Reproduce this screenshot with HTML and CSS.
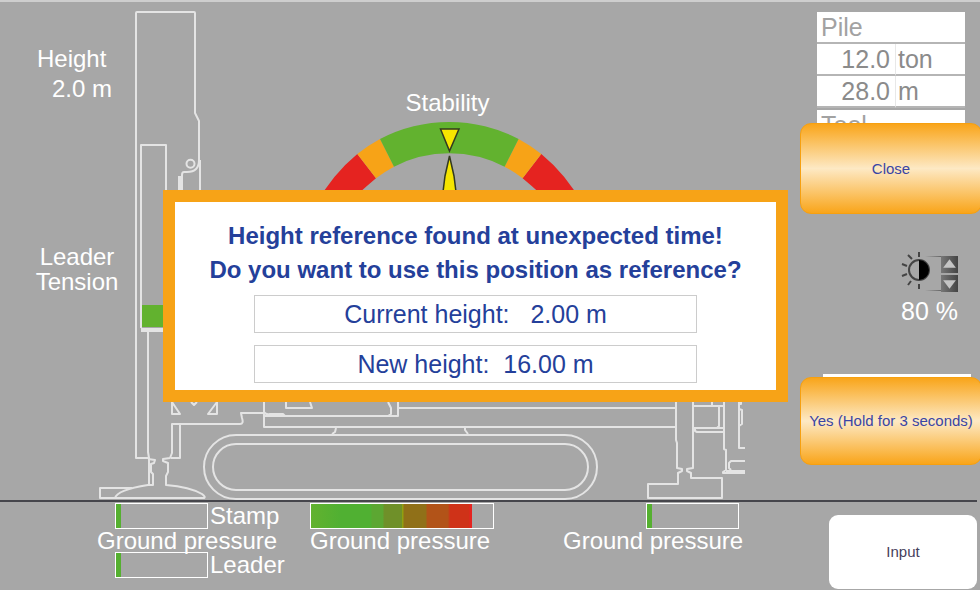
FILE: index.html
```html
<!DOCTYPE html>
<html lang="en">
<head>
<meta charset="utf-8">
<title>Height reference</title>
<link rel="stylesheet" href="styles.css">
</head>
<body>
<div class="screen">
  <main class="stage">
    <svg class="machine" viewBox="0 0 800 500" aria-hidden="true">
      <g class="line">
        <path d="M148 458H136V13Q136 12 137 12H194Q195 12 195 13V113L199 121V160Q199 172 187 172H184Q182 172 182 175V192"/>
        <circle cx="190.500" cy="163.700" r="4"/>
        <path class="thick" d="M180 176V192"/>
        <path d="M200 160V192M141 328V145H166V192M148 331V452L149 458V485"/>
        <path class="thick" d="M141 330H166"/>
        <path d="M148 459L155 460L154 463L151 464V472L153 474V485H148Q117 490 115 498H204Q206 497 202 494Q190 487 166 485V476L168 472V463L163 461V459L170 458L172 453V424H240Q244 424 242 418L241 413H264"/>
        <path d="M180 424V458H171M132 488H100V498H116"/>
        <path d="M172 402V414H180ZM217 402V414H208ZM191 402L194 405L197 402"/>
        <path d="M264 402V427H676M264 416H398V402M264 412Q266 415 270 414H283L285 416M286 402V408H312L310 402M388 402L391 408V414L388 416M398 408H676"/>
        <rect x="204" y="435" width="393" height="64" rx="32"/>
        <rect x="213" y="444" width="375" height="46" rx="23"/>
        <path d="M332 434L335 432L336 428M465 428V430L468 434"/>
        <path d="M676 402V440L677 443V468L682 469V471L678 473V484H648V498H722V478H691V473L687 471V469L693 468V440V402"/>
        <path d="M693 406H724M712 402V406M719 406V426L717 428M693 428H724M695 428V431L697 432H724M724 402V449L726 450V470L723 472V473H745M726 471H745M745 461H731L729 463V468L731 470M739 402V448H745M741 402V404H739M739 409L742 410V424L739 426"/>
      </g>
      <rect class="ok" x="142" y="305" width="24" height="22"/>
      <path class="bad" d="M316 204Q333 174 357.300 154L376 178.300Q356 195 346 206ZM582.600 204Q565.600 174 541.300 154L522.600 178.300Q542.600 195 552.600 206Z"/>
      <path class="warn" d="M357.300 154A149 149 0 0 1 380 139L394 166.700A121 121 0 0 0 376 178.300ZM541.300 154A149 149 0 0 0 518.600 139L504.600 166.700A121 121 0 0 1 522.600 178.300Z"/>
      <path class="ok" d="M380 139A149 149 0 0 1 518.600 139L504.600 166.700A121 121 0 0 0 394 166.700Z"/>
      <path class="needle" d="M440.500 129H459L449.500 151Z"/>
      <path class="needle" d="M449.500 156L445 176L443 192H456L454 176Z"/>
    </svg>
    <section class="readouts">
      <div class="height"><div>Height</div><div>2.0 m</div></div>
      <div class="tension">Leader<br>Tension</div>
    </section>
    <div class="center">
      <div class="stability">Stability</div>
      <section class="dialog" role="dialog" aria-labelledby="question">
        <h1 class="question" id="question">Height reference found at unexpected time!<br>Do you want to use this position as reference?</h1>
        <div class="field">Current height:&nbsp;&nbsp; 2.00 m</div>
        <div class="field">New height:&nbsp; 16.00 m</div>
      </section>
    </div>
  </main>

  <aside class="side">
    <table class="data">
      <thead><tr><th colspan="2">Pile</th></tr></thead>
      <tbody>
        <tr><td class="value">12.0</td><td>ton</td></tr>
        <tr><td class="value">28.0</td><td>m</td></tr>
      </tbody>
    </table>
    <table class="data tool">
      <thead><tr><th>Tool</th></tr></thead>
    </table>
    <button class="action close" type="button">Close</button>
    <div class="brightness">
      <div class="dimmer">
        <svg class="sun" viewBox="0 0 40 42" aria-hidden="true">
          <defs>
            <linearGradient id="fade"><stop offset="0" stop-color="#a7a7a7"/><stop offset="1" stop-color="#666"/></linearGradient>
          </defs>
          <path class="rays" d="M18 1V6M7 4L11 8M1 13L6 15M1 25L6 23M7 34L10 30M18 38V33"/>
          <circle class="disc" cx="18" cy="19" r="10"/>
          <path d="M18 9A10 10 0 0 1 18 29Z"/>
          <rect x="24" y="5" width="16" height="1" fill="url(#fade)"/>
          <rect x="24" y="39" width="16" height="1" fill="url(#fade)"/>
        </svg>
        <div class="steps">
          <button class="step" type="button" aria-label="Brighter"><svg viewBox="0 0 16 16"><path d="M8 3L14 11H2Z"/></svg></button>
          <button class="step" type="button" aria-label="Dimmer"><svg viewBox="0 0 16 16"><path d="M8 13L14 5H2Z"/></svg></button>
        </div>
      </div>
      <div class="percent">80 %</div>
    </div>
    <div class="panel-edge"></div>
    <button class="action" type="button">Yes (Hold for 3 seconds)</button>
  </aside>

  <footer class="footer">
    <div class="gauges">
      <div class="gauge">
        <div class="row indent"><div class="bar"><div class="level"></div></div>Stamp</div>
        <div class="name">Ground pressure</div>
        <div class="row indent"><div class="bar"><div class="level"></div></div>Leader</div>
      </div>
      <div class="gauge">
        <div class="row"><div class="bar wide"><div class="scale"></div></div></div>
        <div class="name">Ground pressure</div>
      </div>
      <div class="gauge">
        <div class="row far"><div class="bar"><div class="level"></div></div></div>
        <div class="name">Ground pressure</div>
      </div>
    </div>
    <button class="input" type="button">Input</button>
  </footer>
</div>
</body>
</html>
```
FILE: styles.css
```css
* {
  box-sizing: border-box;
}

body {
  margin: 0;
  background: #a7a7a7;
  color: #fff;
  font: 24px/25px "Liberation Sans", Arial, sans-serif;
  overflow-x: hidden;
}

button {
  font: 15px/20px "Liberation Sans", Arial, sans-serif;
  border: 0;
  padding: 0;
}

.screen {
  min-height: 100vh;
  display: grid;
  grid-template-columns: 1fr 180px;
  grid-template-rows: 1fr auto;
  box-shadow: inset 0 2px #cecece;
}

/* Machine view */
.stage {
  position: relative;
  display: grid;
  grid-template-columns: 163px 1fr;
}

.machine {
  position: absolute;
  top: 0;
  left: 0;
  width: 100%;
}

.line {
  fill: none;
  stroke: #e4e4e4;
  stroke-width: 2;
  stroke-linejoin: round;
}

.line .thick {
  stroke-width: 4;
}

.ok {
  fill: #62b22f;
}

.warn {
  fill: #f7a317;
}

.bad {
  fill: #e52320;
}

.needle {
  fill: #f6e500;
  stroke: #333a20;
  stroke-width: 1.5;
}

.readouts {
  position: relative;
  padding: 44px 44px 0 35px;
}

.height {
  line-height: 30px;
  width: 77px;
}

.height div:first-child {
  padding-left: 2px;
}

.height div:last-child {
  text-align: right;
}

.tension {
  margin-top: 140px;
  text-align: center;
}

.center {
  position: relative;
  padding: 90px 12px 0 0;
}

.stability {
  text-align: center;
  padding-right: 56px;
}

.dialog {
  margin-top: 75px;
  padding: 17px 79px 7px;
  border: 12px solid #f7a317;
  background: #fff;
  color: #24409a;
}

.question {
  margin: 0 -60px 8px;
  font-size: 24px;
  line-height: 34px;
  text-align: center;
}

.field {
  border: 1px solid #ccc;
  font-size: 25px;
  line-height: 36px;
  text-align: center;
}

.field + .field {
  margin-top: 12px;
}

/* Side column */
.side {
  position: relative;
  padding-top: 12px;
}

.data {
  width: 148px;
  margin-left: 17px;
  border-collapse: separate;
  border-spacing: 0;
  color: #8b8b8b;
}

.data th,
.data td {
  height: 32px;
  padding: 0 2px;
  background: #fff;
  border-bottom: 2px solid #b5b5b5;
  font-size: 25px;
}

.data th {
  padding-left: 4px;
  color: #a2a2a2;
  font-weight: normal;
  text-align: left;
}

.data .value {
  width: 79px;
  padding-right: 5px;
  border-right: 1px solid #e8e8e8;
  text-align: right;
}

.tool {
  margin-top: 2px;
}

.action {
  position: relative;
  display: block;
  width: 182px;
  height: 88px;
  border: 1px solid #f6a010;
  border-radius: 11px;
  background: linear-gradient(#f9a51a, #fde9c4 50%, #f9a51a);
  color: #3a45a5;
}

.close {
  height: 91px;
  margin-top: -19px;
}

.brightness {
  margin: 37px 18px 0 101px;
}

.dimmer {
  display: flex;
}

.sun {
  width: 40px;
  height: 42px;
}

.rays,
.disc {
  fill: none;
  stroke: #444;
  stroke-width: 2;
}

.steps {
  display: grid;
  gap: 2px;
  align-content: start;
  padding-top: 5px;
}

.step {
  width: 17px;
  height: 17px;
  background: linear-gradient(90deg, #777, #444);
}

.step svg {
  display: block;
  fill: #c4c4c4;
}

.percent {
  margin-top: 6px;
  font-size: 25px;
}

.panel-edge {
  margin: 50px 9px 0 23px;
  height: 3px;
  background: #fff;
}

/* Ground pressure strip */
.footer {
  grid-column: 1 / -1;
  display: flex;
  margin-right: 3px;
  border-top: 2px solid #46464c;
}

.gauges {
  flex: 1;
  display: grid;
  grid-template-columns: 213fr 253fr 266fr;
  padding: 1px 0 12px 97px;
}

.row {
  display: flex;
  gap: 2px;
  height: 26px;
  line-height: 26px;
}

.indent {
  padding-left: 18px;
}

.far {
  padding-left: 83px;
}

.name {
  line-height: 23px;
  white-space: nowrap;
}

.bar {
  width: 93px;
  border: 1px solid #fff;
}

.wide {
  width: 184px;
}

.level {
  width: 5px;
  height: 100%;
  background: #55b030;
}

.scale {
  width: 161px;
  height: 100%;
  background: linear-gradient(90deg, #62b22f, #50b032 30px, #50b032 60px, #5ca732 61px, #5ca732 72px, #6f9029 73px, #6f9029 91px, #91a010 91px, #91a010 92px, #907018 93px, #907018 115px, #b25318 116px, #b25318 137px, #cf3218 139px, #cf3218 158px, #e52320 159px);
}

.input {
  width: 148px;
  height: 74px;
  margin-top: 13px;
  border-radius: 9px;
  background: #fff;
  color: #46405c;
}
```
